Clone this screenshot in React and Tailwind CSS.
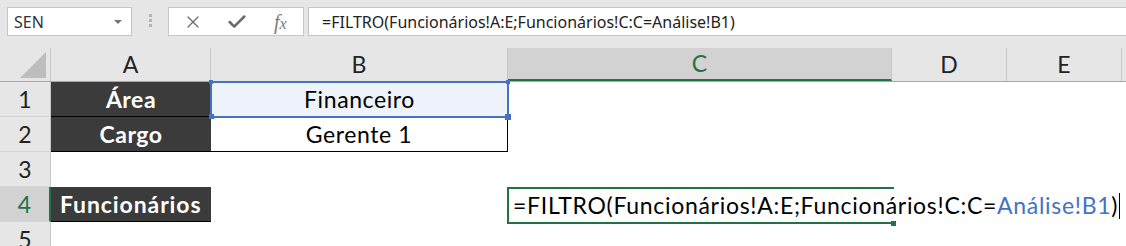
import { X, Check } from "lucide-react";

const cols = [
  { key: "A", w: "w-[160px]" },
  { key: "B", w: "w-[297px]" },
  { key: "C", w: "w-[384px]" },
  { key: "D", w: "w-[115px]" },
  { key: "E", w: "w-[115px]" },
];

const formula = "=FILTRO(Funcionários!A:E;Funcionários!C:C=Análise!B1)";

export default function App() {
  return (
    <div className="w-[1126px] h-[246px] overflow-hidden bg-white relative font-['Lato',sans-serif] text-[#222]">
      {/* FORMULA BAR */}
      <div className="h-[48px] bg-[#e6e6e6] flex items-start pt-[7px] pl-[7px]">
        <div className="w-[125px] h-[29px] bg-white border border-[#c6c6c6] flex items-center justify-between pl-[6px] pr-[9px]">
          <span className="font-['Noto_Sans',sans-serif] text-[16px] text-[#333]">SEN</span>
          <span className="w-0 h-0 border-l-[4px] border-r-[4px] border-t-[4px] border-l-transparent border-r-transparent border-t-[#777]" />
        </div>
        <div className="ml-[17px] mt-[7px] flex flex-col gap-[2px]">
          <span className="w-[3px] h-[3px] bg-[#b4b4b4]" />
          <span className="w-[3px] h-[3px] bg-[#b4b4b4]" />
          <span className="w-[3px] h-[3px] bg-[#b4b4b4]" />
        </div>
        <div className="ml-[16px] w-[136px] h-[29px] bg-white border border-[#c6c6c6] flex items-center">
          <X className="ml-[14px] text-[#6b6b6b]" size={20} strokeWidth={1.5} />
          <Check className="ml-[23px] text-[#6b6b6b]" size={22} strokeWidth={2.8} />
          <span className="ml-[26px] font-['Liberation_Serif',serif] italic text-[20px] text-[#7b7b7b]">
            f<span className="text-[16px]">x</span>
          </span>
        </div>
        <div className="ml-[4px] flex-1 h-[29px] bg-white border border-[#c6c6c6] border-r-0 flex items-center pl-[13px]">
          <span className="font-['Noto_Sans',sans-serif] text-[16px] text-[#222]">{formula}</span>
        </div>
      </div>

      {/* COLUMN HEADERS */}
      <div className="flex h-[34px] bg-[#e6e6e6] border-b border-[#a8a8a8]">
        <div className="w-[51px] border-r border-[#c6c6c6] relative">
          <div className="absolute right-[4px] bottom-[3px] w-0 h-0 [border-bottom:26px_solid_#bdbdbd] [border-left:26px_solid_transparent]" />
        </div>
        {cols.map((c) => (
          <div
            key={c.key}
            className={
              c.w +
              " flex items-center justify-center text-[23px] border-r border-[#c6c6c6] " +
              (c.key === "C" ? "bg-[#d2d2d2] text-[#217346] border-b-2 border-b-[#217346]" : "")
            }
          >
            {c.key}
          </div>
        ))}
        <div className="flex-1" />
      </div>

      {/* ROWS */}
      <Row n="1">
        <Dark>Área</Dark>
        <div className="w-[297px] bg-[#edf2fb] flex items-center justify-center text-[23px] tracking-[0.6px] text-black">
          Financeiro
        </div>
      </Row>
      <Row n="2">
        <Dark>Cargo</Dark>
        <div className="w-[297px] border-r border-b border-black flex items-center justify-center text-[23px] tracking-[0.6px] text-black">
          Gerente 1
        </div>
      </Row>
      <Row n="3" />
      <Row n="4" active>
        <div className="w-[160px] bg-[#3b3b3b] border-b border-black flex items-center pl-[9px] text-[23px] tracking-[0.9px] font-bold text-white whitespace-nowrap">
          Funcionários
        </div>
      </Row>
      <Row n="5" />

      {/* B1 selection (formula reference) */}
      <div className="absolute left-[210px] top-[81px] w-[299px] h-[37px] border-2 border-[#4472c4]">
        <span className="absolute -left-[3px] -top-[3px] w-[4px] h-[4px] bg-[#4472c4]" />
        <span className="absolute -right-[3px] -top-[3px] w-[4px] h-[4px] bg-[#4472c4]" />
        <span className="absolute -left-[3px] -bottom-[3px] w-[5px] h-[5px] bg-[#4472c4]" />
        <span className="absolute -right-[4px] -bottom-[4px] w-[6px] h-[6px] bg-[#4472c4]" />
      </div>

      {/* C4 in-cell editor */}
      <div className="absolute left-[507px] top-[187px] w-[387px] h-[37px] border-l-2 border-t-2 border-b-2 border-[#217346]">
        <span className="absolute -right-[2px] -bottom-[4px] w-[5px] h-[5px] bg-[#217346]" />
      </div>
      <div className="absolute left-[513px] top-[188px] h-[35px] flex items-center text-[23px] tracking-[0.7px] text-black whitespace-nowrap">
        <span>=FILTRO(Funcionários!A:E;Funcionários!C:C=</span>
        <span className="text-[#4472c4]">Análise!B1</span>
        <span>)</span>
        <span className="ml-[1px] w-[1px] h-[26px] bg-black" />
      </div>
    </div>
  );
}

function Row({ n, active, children }) {
  return (
    <div className="flex h-[35px]">
      <div
        className={
          "w-[51px] flex items-center justify-center text-[23px] border-b border-[#d4d4d4] " +
          (active
            ? "bg-[#d2d2d2] text-[#217346] border-r-2 border-r-[#217346]"
            : "bg-[#e6e6e6] border-r border-r-[#c6c6c6]")
        }
      >
        {n}
      </div>
      {children}
    </div>
  );
}

function Dark({ children }) {
  return (
    <div className="w-[160px] bg-[#3b3b3b] border-b border-black flex items-center justify-center text-[23px] tracking-[0.5px] font-bold text-white">
      {children}
    </div>
  );
}
